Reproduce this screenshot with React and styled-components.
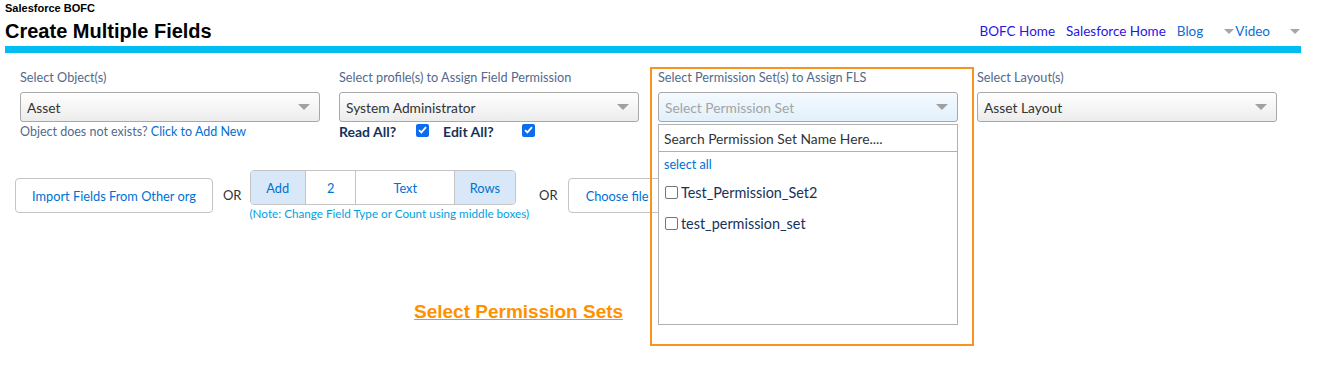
import React from 'react';
import styled, { createGlobalStyle } from 'styled-components';

const Global = createGlobalStyle`
  body {
    margin: 0;
    background: #fff;
    font-family: Lato, "Open Sans", sans-serif;
  }
`;

const Page = styled.div`
  position: relative;
  padding: 0 32px 0 5px;
  height: 392px;
  box-sizing: border-box;
`;

const Brand = styled.div`
  font-family: "Liberation Sans", Arial, sans-serif;
  font-weight: bold;
  font-size: 11px;
  line-height: 14px;
  padding-top: 1px;
  color: #000;
`;

const TitleRow = styled.div`
  display: flex;
  align-items: flex-end;
  justify-content: space-between;
  height: 31px;
`;

const Title = styled.h1`
  margin: 0 0 4px;
  font-family: "Liberation Sans", Arial, sans-serif;
  font-weight: bold;
  font-size: 20px;
  line-height: 22px;
  color: #000;
`;

const Nav = styled.nav`
  display: flex;
  align-items: center;
  gap: 11px;
  margin-bottom: 7px;
  font-size: 13.5px;
`;

const NavLink = styled.a`
  color: ${p => (p.$visited ? '#2a14e6' : '#0a6fd6')};
  text-decoration: none;
  display: flex;
  align-items: center;
`;

const Caret = styled.span`
  display: inline-block;
  width: 0;
  height: 0;
  border-left: 5px solid transparent;
  border-right: 5px solid transparent;
  border-top: 5px solid #a6a6a6;
  margin: 0 1px 0 ${p => p.$gap || 0}px;
`;

const Bar = styled.div`
  height: 7px;
  background: #00bdf2;
`;

const Grid = styled.div`
  display: grid;
  grid-template-columns: repeat(4, 300px);
  column-gap: 19px;
  padding: 16px 0 0 15px;
`;

const Field = styled.div`
  position: relative;
`;

const Label = styled.div`
  font-size: 12.7px;
  line-height: 17px;
  color: #54698d;
  margin-bottom: 6px;
`;

const Select = styled.div`
  height: 30px;
  box-sizing: border-box;
  border: 1px solid #a8a8a8;
  border-radius: 3px;
  background: ${p => (p.$open
    ? 'linear-gradient(#f4faff, #e2f0fb)'
    : 'linear-gradient(#ffffff, #ececec)')};
  display: flex;
  align-items: center;
  justify-content: space-between;
  padding: 0 9px 0 6px;
  font-size: 13.8px;
  color: ${p => (p.$placeholder ? '#a4a4a4' : '#333')};
`;

const Arrow = styled.span`
  width: 0;
  height: 0;
  border-left: 6px solid transparent;
  border-right: 6px solid transparent;
  border-top: 6px solid #a0a0a0;
`;

const Hint = styled.div`
  margin-top: 2px;
  font-size: 12.5px;
  line-height: 16px;
  color: #54698d;
`;

const Link = styled.a`
  color: #0070d2;
  text-decoration: none;
`;

const Checks = styled.div`
  display: flex;
  align-items: center;
  margin-top: 1px;
  font-size: 14px;
  line-height: 17px;
  font-weight: bold;
  color: #16325c;
`;

const Tick = styled.span`
  display: inline-flex;
  width: 13px;
  height: 13px;
  border-radius: 2px;
  background: #0b6cf0;
  margin: -3px ${p => p.$after}px 0 ${p => p.$before}px;
  align-items: center;
  justify-content: center;
`;

const Dropdown = styled.div`
  position: absolute;
  top: 55px;
  left: 0;
  width: 300px;
  height: 201px;
  box-sizing: border-box;
  border: 1px solid #b0b0b0;
  background: #fff;
  z-index: 2;
`;

const Search = styled.div`
  height: 26px;
  border-bottom: 1px solid #b0b0b0;
  display: flex;
  align-items: center;
  padding-left: 5px;
  font-size: 13.8px;
  color: #333;
`;

const SelectAll = styled.div`
  padding: 5px 5px 0;
  font-size: 12.6px;
  line-height: 16px;
  color: #0070d2;
`;

const Option = styled.label`
  display: flex;
  align-items: center;
  height: 20px;
  margin: ${p => p.$top}px 0 0 6px;
  font-size: 14.4px;
  color: #16325c;
`;

const Box = styled.span`
  width: 11px;
  height: 11px;
  border: 1px solid #767676;
  border-radius: 2px;
  margin-right: 3px;
`;

const Actions = styled.div`
  display: flex;
  align-items: flex-start;
  gap: 10px;
  padding: 30px 0 0 10px;
`;

const Button = styled.button`
  height: 35px;
  margin-top: 8px;
  padding: 0 ${p => p.$pad || 16}px;
  border: 1px solid #c4c4c4;
  border-radius: 4px;
  background: #fff;
  color: #0070d2;
  font-family: Lato, sans-serif;
  font-size: 12.8px;
  white-space: nowrap;
`;

const Or = styled.span`
  margin-top: 17px;
  font-size: 13px;
  line-height: 16px;
  color: #333;
`;

const Stack = styled.div`
  display: flex;
  flex-direction: column;
  margin-left: -2px;
`;

const Segments = styled.div`
  display: flex;
  width: 266px;
  height: 35px;
  box-sizing: border-box;
  border: 1px solid #c4c4c4;
  border-radius: 4px;
  overflow: hidden;
`;

const Segment = styled.div`
  width: ${p => p.$w}px;
  display: flex;
  align-items: center;
  justify-content: center;
  font-size: 12.8px;
  color: #0070d2;
  background: ${p => (p.$on ? '#d8e8f8' : '#fff')};
  border-left: ${p => (p.$first ? 'none' : '1px solid #c4c4c4')};
`;

const Note = styled.div`
  margin-top: 1px;
  font-size: 11.7px;
  line-height: 15px;
  color: #00a1df;
  white-space: nowrap;
`;

const Highlight = styled.div`
  position: absolute;
  left: 650px;
  top: 67px;
  width: 324px;
  height: 279px;
  box-sizing: border-box;
  border: 2px solid #f7931e;
  pointer-events: none;
  z-index: 3;
`;

const Callout = styled.a`
  position: absolute;
  left: 414px;
  top: 301px;
  font-family: "Liberation Sans", Arial, sans-serif;
  font-weight: bold;
  font-size: 19px;
  color: #ff9100;
  text-decoration: underline;
`;

const Check = () => (
  <svg width="9" height="8" viewBox="0 0 9 8">
    <path d="M1 4.2 L3.4 6.4 L8 1.2" stroke="#fff" strokeWidth="1.8" fill="none" />
  </svg>
);

export default function App() {
  return (
    <Page>
      <Global />
      <Brand>Salesforce BOFC</Brand>
      <TitleRow>
        <Title>Create Multiple Fields</Title>
        <Nav>
          <NavLink $visited>BOFC Home</NavLink>
          <NavLink $visited>Salesforce Home</NavLink>
          <NavLink>Blog</NavLink>
          <NavLink><Caret $gap={10} />Video</NavLink>
          <Caret $gap={9} />
        </Nav>
      </TitleRow>
      <Bar />
      <Grid>
        <Field>
          <Label>Select Object(s)</Label>
          <Select>Asset<Arrow /></Select>
          <Hint>Object does not exists? <Link>Click to Add New</Link></Hint>
        </Field>
        <Field>
          <Label>Select profile(s) to Assign Field Permission</Label>
          <Select>System Administrator<Arrow /></Select>
          <Checks>
            Read All?<Tick $before={20} $after={14}><Check /></Tick>
            Edit All?<Tick $before={28} $after={0}><Check /></Tick>
          </Checks>
        </Field>
        <Field>
          <Label>Select Permission Set(s) to Assign FLS</Label>
          <Select $open $placeholder>Select Permission Set<Arrow /></Select>
          <Dropdown>
            <Search>Search Permission Set Name Here....</Search>
            <SelectAll>select all</SelectAll>
            <Option $top={9}><Box />Test_Permission_Set2</Option>
            <Option $top={11}><Box />test_permission_set</Option>
          </Dropdown>
        </Field>
        <Field>
          <Label>Select Layout(s)</Label>
          <Select>Asset Layout<Arrow /></Select>
        </Field>
      </Grid>
      <Actions>
        <Button>Import Fields From Other org</Button>
        <Or>OR</Or>
        <Stack>
          <Segments>
            <Segment $w={55} $on $first>Add</Segment>
            <Segment $w={50}>2</Segment>
            <Segment $w={99}>Text</Segment>
            <Segment $w={60} $on>Rows</Segment>
          </Segments>
          <Note>(Note: Change Field Type or Count using middle boxes)</Note>
        </Stack>
        <Or>OR</Or>
        <Button $pad={17}>Choose file</Button>
      </Actions>
      <Highlight />
      <Callout>Select Permission Sets</Callout>
    </Page>
  );
}
